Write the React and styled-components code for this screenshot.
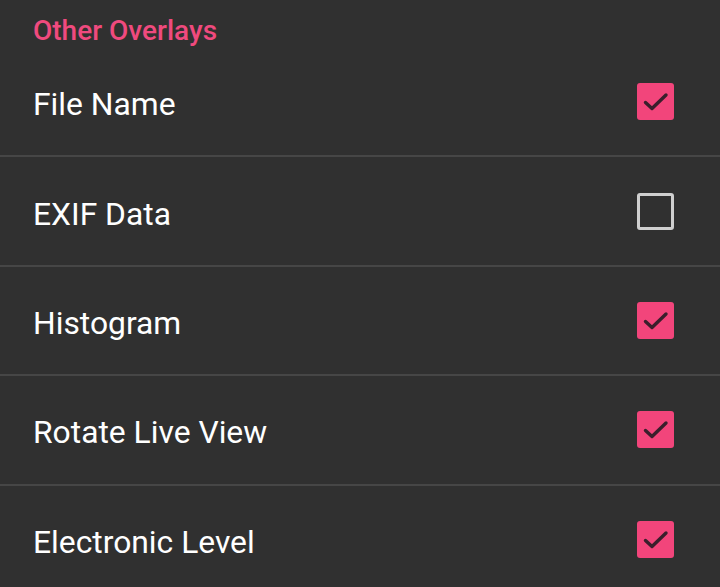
import React from "react";
import styled, { createGlobalStyle } from "styled-components";

const Global = createGlobalStyle`
  html, body { margin: 0; padding: 0; background: #303030; }
  body { font-family: Roboto, "Noto Sans", sans-serif; }
`;

const Page = styled.div`
  width: 720px;
  height: 587px;
  background: #303030;
  overflow: hidden;
`;

const Header = styled.div`
  height: 48px;
  box-sizing: border-box;
  padding: 14px 33px 0;
  color: #ef4a7e;
  font-size: 28px;
  font-weight: 500;
  line-height: 34px;
`;

const Row = styled.div`
  display: flex;
  align-items: center;
  justify-content: space-between;
  height: 107.4px;
  padding: 0 46px 0 33px;
  border-bottom: 2px solid #464646;
  &:last-child { border-bottom: none; }
`;

const Label = styled.span`
  color: #ffffff;
  font-size: 31.8px;
  line-height: 38px;
  padding-top: 5px;
`;

const Box = styled.div`
  width: 37px;
  height: 37px;
  box-sizing: border-box;
  border-radius: 3px;
  display: flex;
  align-items: center;
  justify-content: center;
  background: ${(p) => (p.$checked ? "#f2457b" : "transparent")};
  border: ${(p) => (p.$checked ? "none" : "3px solid #cfcfcf")};
`;

const items = [
  ["File Name", true],
  ["EXIF Data", false],
  ["Histogram", true],
  ["Rotate Live View", true],
  ["Electronic Level", true],
];

export default function App() {
  return (
    <Page>
      <Global />
      <Header>Other Overlays</Header>
      {items.map(([label, checked]) => (
        <Row key={label}>
          <Label>{label}</Label>
          <Box $checked={checked}>
            {checked && (
              <svg width="37" height="37" viewBox="0 0 37 37">
                <path d="M8.5 19.5L15 25.5L29 12" fill="none" stroke="#3a1f2c" strokeWidth="3.4" strokeLinecap="round" strokeLinejoin="round" />
              </svg>
            )}
          </Box>
        </Row>
      ))}
    </Page>
  );
}
